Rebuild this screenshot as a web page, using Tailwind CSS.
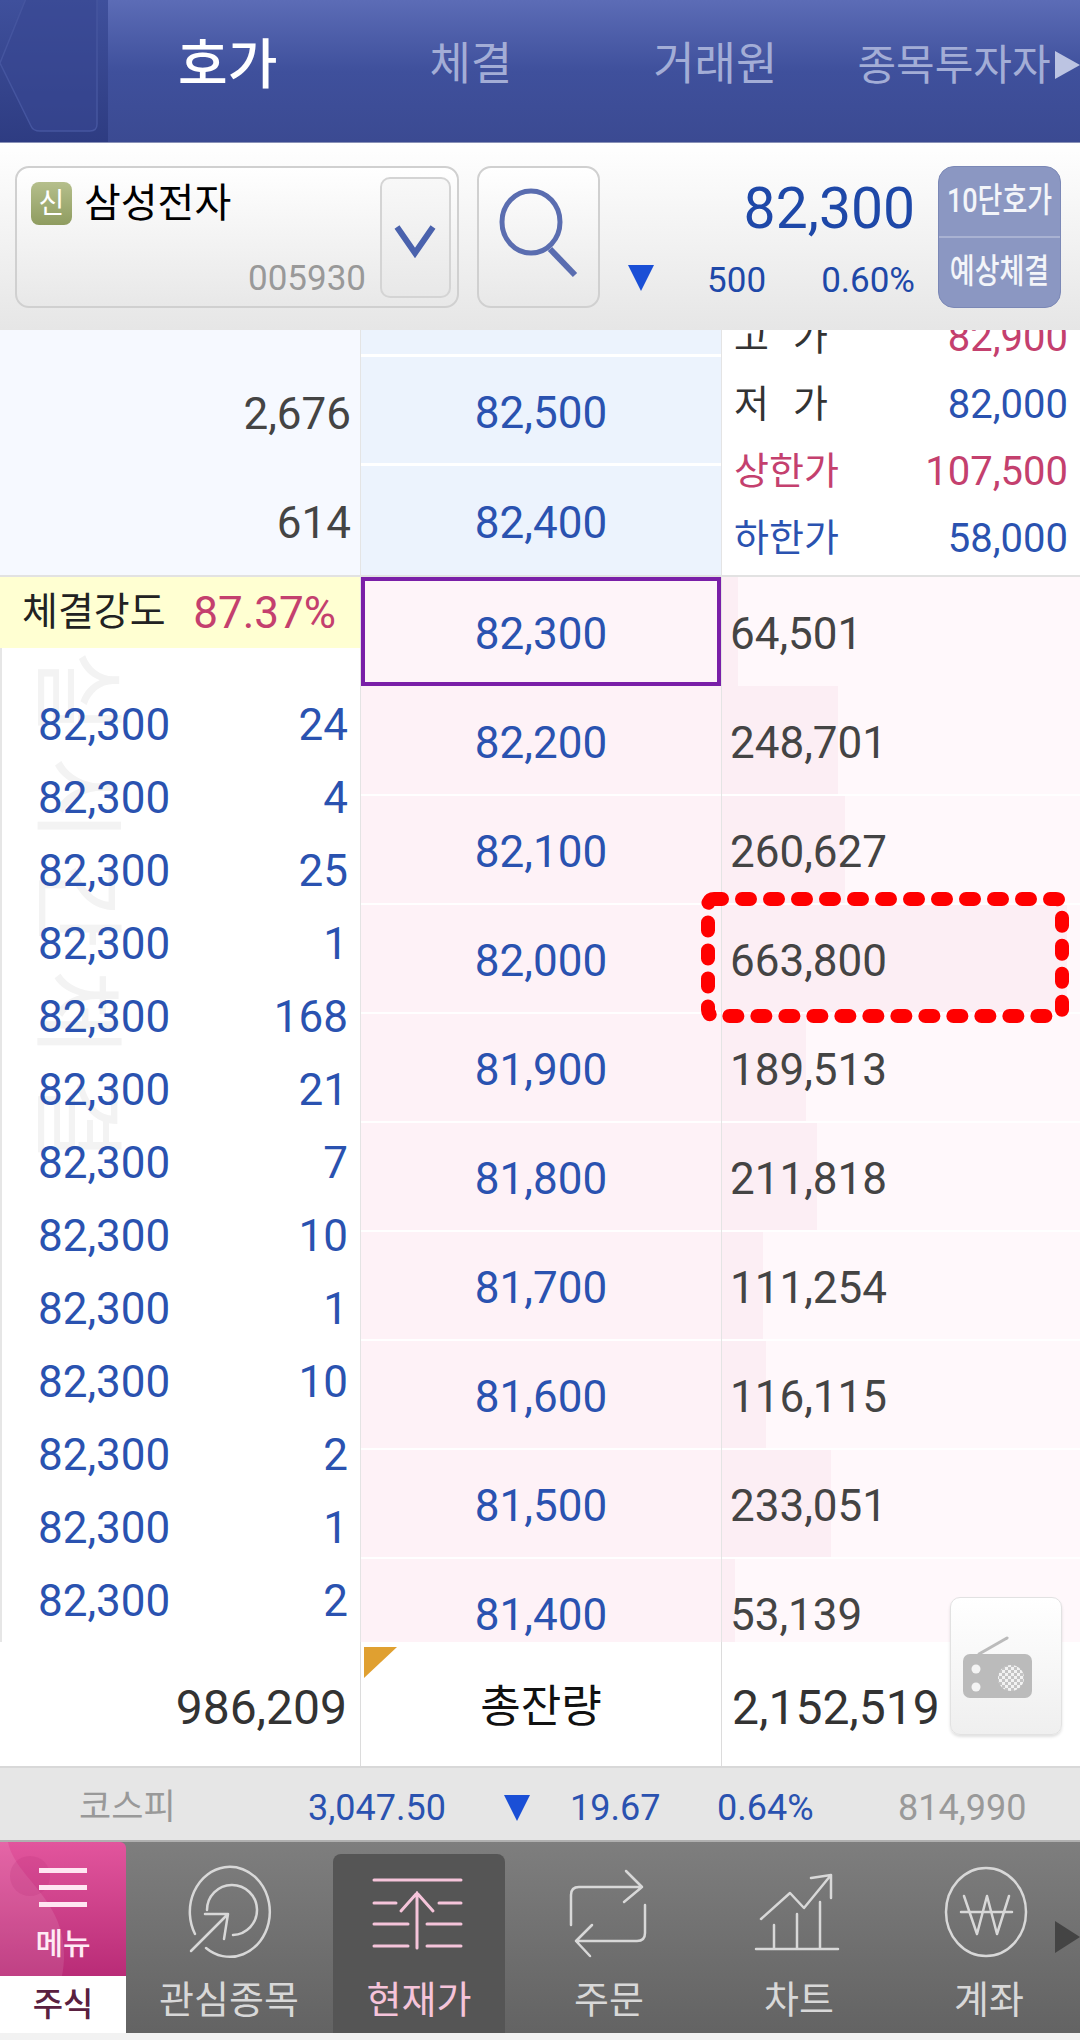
<!DOCTYPE html>
<html lang="ko">
<head>
    <meta charset="UTF-8">
    <meta name="viewport" content="width=device-width, initial-scale=1.0">
    <script src="https://cdn.jsdelivr.net/npm/@tailwindcss/browser@4"></script>
    <title>호가</title>
</head>
<body class="bg-white">
<div class="relative w-[1080px] h-[2040px] overflow-hidden flex flex-col bg-[#f2f2f2] font-[Roboto,'Noto_Sans_CJK_KR',sans-serif] text-[44px] text-[#444]">

  <!-- top tabs -->
  <div class="flex h-[143px] shrink-0 bg-gradient-to-b from-[#5c6cb6] via-[#3f509c] to-[#3b4a92] border-b border-[#8a92b8] whitespace-nowrap">
    <div class="w-[108px] shrink-0 bg-gradient-to-b from-[#3f509c] to-[#2e3c82]">
      <svg width="108" height="143" viewBox="0 0 108 143"><path d="M27 -4 L0 63 L31 126 Q33 131 40 131 L90 131 Q97 131 97 124 L97 -4 Z" fill="#384792" fill-opacity="0.6" stroke="#45559f" stroke-width="1.5"/></svg>
    </div>
    <div class="ml-[70px] h-[130px] flex items-center text-[54px] font-medium text-white">호가</div>
    <div class="ml-[152px] h-[130px] flex items-center text-[45px] text-[#a3add6]">체결</div>
    <div class="ml-[141px] h-[130px] flex items-center text-[45px] text-[#a3add6]">거래원</div>
    <div class="ml-[80px] h-[130px] flex items-center text-[42px] text-[#a3add6]">종목투자자</div>
    <div class="flex-1 h-[130px] flex items-center justify-end">
      <svg width="26" height="30" viewBox="0 0 26 30"><path d="M1 1 L26 15 L1 29 Z" fill="#bcc4e2"/></svg>
    </div>
  </div>

  <!-- stock bar -->
  <div class="relative flex h-[187px] shrink-0 items-start pt-[23px] pl-[15px] bg-gradient-to-b from-white to-[#e6e6e6]">
    <div class="relative w-[444px] h-[142px] rounded-[14px] border-2 border-[#d0d0d0] bg-gradient-to-b from-white to-[#e8e8e8]">
      <div class="flex items-center pt-[14px] pl-[14px]">
        <span class="w-[41px] h-[43px] rounded-[8px] flex items-center justify-center text-[28px] text-white bg-gradient-to-b from-[#b5bf8c] to-[#8f9c60]">신</span>
        <span class="ml-[12px] text-[40px] text-black leading-[42px]">삼성전자</span>
      </div>
      <div class="absolute right-[91px] bottom-[6px] text-[35px] leading-[42px] text-[#999]">005930</div>
      <div class="absolute right-[6px] top-[9px] w-[71px] h-[121px] rounded-[10px] border-2 border-[#d4d4d4] bg-gradient-to-b from-[#f8f8f8] to-[#e8e8e8]">
        <svg width="67" height="117" viewBox="0 0 67 117"><path d="M15 48 L33 74 L51 48" fill="none" stroke="#4a62ad" stroke-width="6"/></svg>
      </div>
    </div>
    <div class="ml-[18px] w-[123px] h-[142px] rounded-[14px] border-2 border-[#d0d0d0] bg-gradient-to-b from-white to-[#e8e8e8]">
      <svg width="119" height="138" viewBox="0 0 119 138"><ellipse cx="52" cy="54" rx="29" ry="31" fill="none" stroke="#5a6db0" stroke-width="5"/><path d="M71 81 L96 107" stroke="#5a6db0" stroke-width="6"/></svg>
    </div>
    <div class="w-[338px] h-[142px] flex flex-col items-end pr-[23px] text-[#1e48a8]">
      <div class="text-[57px] leading-[64px] mt-[11px]">82,300</div>
      <div class="flex items-center mt-[16px] text-[35px] leading-[48px]">
        <svg width="26" height="26" viewBox="0 0 26 26" class="mr-[53px] -mt-[6px]"><path d="M0 0 L26 0 L13 26 Z" fill="#1a4fd6"/></svg>
        <span class="mr-[55px]">500</span>
        <span>0.60%</span>
      </div>
    </div>
    <div class="w-[123px] h-[142px] rounded-[16px] bg-[#8b97c2] border border-[#7b88b6] flex flex-col text-[27px] font-medium text-white/90 whitespace-nowrap">
      <div class="h-[71px] flex items-center justify-center border-b-2 border-[#a9b2d2]"><span class="scale-y-[1.25]">10단호가</span></div>
      <div class="flex-1 flex items-center justify-center"><span class="scale-y-[1.25]">예상체결</span></div>
    </div>
  </div>

  <!-- quote table -->
  <div class="flex h-[1312px] shrink-0 overflow-hidden bg-white">
    <!-- left -->
    <div class="relative w-[360px] shrink-0 flex flex-col overflow-hidden">
      <div class="h-[247px] shrink-0 flex flex-col pt-[27px] bg-[#f6f9ff] border-b-2 border-[#e2e2e2] pr-[9px] text-right">
        <div class="h-[109px] pt-[5px] flex items-center justify-end">2,676</div>
        <div class="h-[109px] pt-[5px] flex items-center justify-end">614</div>
      </div>
      <div class="h-[71px] shrink-0 flex items-center justify-between pl-[22px] pr-[24px] bg-[#ffffd2]">
        <span class="text-[39px] text-[#222]">체결강도</span><span class="text-[44px] text-[#c4406e]">87.37%</span>
      </div>
      <div class="absolute left-[30px] top-[320px] text-[92px] leading-[92px] tracking-[22px] text-[#f3f3f3] whitespace-nowrap [writing-mode:vertical-rl] [text-orientation:sideways]">실시간체결</div>
      <div class="relative flex-1 flex flex-col pt-[40px] pl-[36px] pr-[12px] text-[#2a52b0] border-l-2 border-[#e6e6e6]">
        <div class="h-[73px] shrink-0 flex items-center justify-between"><span>82,300</span><span>24</span></div>
        <div class="h-[73px] shrink-0 flex items-center justify-between"><span>82,300</span><span>4</span></div>
        <div class="h-[73px] shrink-0 flex items-center justify-between"><span>82,300</span><span>25</span></div>
        <div class="h-[73px] shrink-0 flex items-center justify-between"><span>82,300</span><span>1</span></div>
        <div class="h-[73px] shrink-0 flex items-center justify-between"><span>82,300</span><span>168</span></div>
        <div class="h-[73px] shrink-0 flex items-center justify-between"><span>82,300</span><span>21</span></div>
        <div class="h-[73px] shrink-0 flex items-center justify-between"><span>82,300</span><span>7</span></div>
        <div class="h-[73px] shrink-0 flex items-center justify-between"><span>82,300</span><span>10</span></div>
        <div class="h-[73px] shrink-0 flex items-center justify-between"><span>82,300</span><span>1</span></div>
        <div class="h-[73px] shrink-0 flex items-center justify-between"><span>82,300</span><span>10</span></div>
        <div class="h-[73px] shrink-0 flex items-center justify-between"><span>82,300</span><span>2</span></div>
        <div class="h-[73px] shrink-0 flex items-center justify-between"><span>82,300</span><span>1</span></div>
        <div class="h-[73px] shrink-0 flex items-center justify-between"><span>82,300</span><span>2</span></div>
      </div>
    </div>

    <!-- middle -->
    <div class="w-[361px] shrink-0 flex flex-col text-[#2a52b0] border-l border-[#e4e4e4]">
      <div class="h-[247px] shrink-0 flex flex-col bg-[#ecf3fd] border-b-2 border-[#e2e2e2]">
        <div class="h-[27px] border-b-[3px] border-white"></div>
        <div class="h-[109px] pt-[5px] flex items-center justify-center border-b-[3px] border-white">82,500</div>
        <div class="h-[109px] pt-[5px] flex items-center justify-center">82,400</div>
      </div>
      <div class="h-[109px] shrink-0 flex items-center justify-center pt-[5px] bg-[#fef4f9] border-4 border-[#7a1fa8]">82,300</div>
      <div class="h-[110px] shrink-0 flex items-center justify-center pt-[5px] bg-[#fef2f7] border-b-2 border-white">82,200</div>
      <div class="h-[109px] shrink-0 flex items-center justify-center pt-[5px] bg-[#fef2f7] border-b-2 border-white">82,100</div>
      <div class="h-[109px] shrink-0 flex items-center justify-center pt-[5px] bg-[#fef2f7] border-b-2 border-white">82,000</div>
      <div class="h-[109px] shrink-0 flex items-center justify-center pt-[5px] bg-[#fef2f7] border-b-2 border-white">81,900</div>
      <div class="h-[109px] shrink-0 flex items-center justify-center pt-[5px] bg-[#fef2f7] border-b-2 border-white">81,800</div>
      <div class="h-[109px] shrink-0 flex items-center justify-center pt-[5px] bg-[#fef2f7] border-b-2 border-white">81,700</div>
      <div class="h-[109px] shrink-0 flex items-center justify-center pt-[5px] bg-[#fef2f7] border-b-2 border-white">81,600</div>
      <div class="h-[109px] shrink-0 flex items-center justify-center pt-[5px] bg-[#fef2f7] border-b-2 border-white">81,500</div>
      <div class="h-[109px] shrink-0 flex items-center justify-center pt-[3px] bg-[#fef2f7]">81,400</div>
    </div>

    <!-- right -->
    <div class="flex-1 flex flex-col bg-[#fff8fb] border-l border-[#e4e4e4]">
      <div class="h-[247px] shrink-0 overflow-hidden bg-white border-b-2 border-[#e2e2e2] pl-[12px] pr-[12px] text-[40px]">
        <div class="-mt-[26px] h-[67px] flex items-center justify-between text-[#333]"><span class="text-[38px] tracking-[24px]">고가</span><span class="text-[#c4406e]">82,900</span></div>
        <div class="h-[67px] flex items-center justify-between text-[#333]"><span class="text-[38px] tracking-[24px]">저가</span><span class="text-[#2a52b0]">82,000</span></div>
        <div class="h-[67px] flex items-center justify-between text-[#c4406e]"><span class="text-[38px]">상한가</span><span>107,500</span></div>
        <div class="h-[67px] flex items-center justify-between text-[#2a52b0]"><span class="text-[38px]">하한가</span><span>58,000</span></div>
      </div>
      <div class="relative h-[109px] shrink-0 flex items-center pl-[8px] pt-[5px]"><div class="absolute inset-y-0 left-0 w-[16px] bg-[#fceef4]"></div><span class="relative">64,501</span></div>
      <div class="relative h-[110px] shrink-0 flex items-center pl-[8px] pt-[5px] border-b-2 border-white"><div class="absolute inset-y-0 left-0 w-[116px] bg-[#fceef4]"></div><span class="relative">248,701</span></div>
      <div class="relative h-[109px] shrink-0 flex items-center pl-[8px] pt-[5px] border-b-2 border-white"><div class="absolute inset-y-0 left-0 w-[123px] bg-[#fceef4]"></div><span class="relative">260,627</span></div>
      <div class="relative h-[109px] shrink-0 flex items-center pl-[8px] pt-[5px] border-b-2 border-white"><div class="absolute inset-y-0 left-0 w-[345px] bg-[#fceef4]"></div><span class="relative">663,800</span></div>
      <div class="relative h-[109px] shrink-0 flex items-center pl-[8px] pt-[5px] border-b-2 border-white"><div class="absolute inset-y-0 left-0 w-[84px] bg-[#fceef4]"></div><span class="relative">189,513</span></div>
      <div class="relative h-[109px] shrink-0 flex items-center pl-[8px] pt-[5px] border-b-2 border-white"><div class="absolute inset-y-0 left-0 w-[95px] bg-[#fceef4]"></div><span class="relative">211,818</span></div>
      <div class="relative h-[109px] shrink-0 flex items-center pl-[8px] pt-[5px] border-b-2 border-white"><div class="absolute inset-y-0 left-0 w-[41px] bg-[#fceef4]"></div><span class="relative">111,254</span></div>
      <div class="relative h-[109px] shrink-0 flex items-center pl-[8px] pt-[5px] border-b-2 border-white"><div class="absolute inset-y-0 left-0 w-[44px] bg-[#fceef4]"></div><span class="relative">116,115</span></div>
      <div class="relative h-[109px] shrink-0 flex items-center pl-[8px] pt-[5px] border-b-2 border-white"><div class="absolute inset-y-0 left-0 w-[109px] bg-[#fceef4]"></div><span class="relative">233,051</span></div>
      <div class="relative h-[109px] shrink-0 flex items-center pl-[8px] pt-[3px]"><div class="absolute inset-y-0 left-0 w-[13px] bg-[#fceef4]"></div><span class="relative">53,139</span></div>
    </div>
  </div>

  <!-- totals -->
  <div class="flex h-[126px] shrink-0 bg-white border-b-2 border-[#d8d8d8] text-[#333]">
    <div class="w-[360px] shrink-0 flex items-center justify-end pt-[8px] pr-[13px] text-[48px]">986,209</div>
    <div class="relative w-[361px] shrink-0 flex items-center justify-center pt-[6px] text-[44px] text-[#111] border-l border-[#dcdcdc]">
      <svg width="34" height="32" viewBox="0 0 34 32" class="absolute left-[3px] top-[5px]"><path d="M0 0 L33 0 L0 31 Z" fill="#e0a030"/></svg>
      총잔량
    </div>
    <div class="flex-1 flex items-center pt-[8px] pl-[10px] text-[48px] border-l border-[#dcdcdc]">2,152,519</div>
  </div>

  <!-- index bar -->
  <div class="relative h-[72px] shrink-0 flex items-center pt-[8px] bg-[#e6e6e6] text-[36px] text-[#2a52b0] whitespace-nowrap">
    <span class="ml-[79px] w-[229px] text-[35px] text-[#999]">코스피</span>
    <span class="w-[196px]">3,047.50</span>
    <svg width="26" height="26" viewBox="0 0 26 26"><path d="M0 0 L26 0 L13 26 Z" fill="#1a4fd6"/></svg>
    <span class="ml-[40px] w-[147px]">19.67</span>
    <span class="w-[181px]">0.64%</span>
    <span class="text-[#999]">814,990</span>
  </div>

  <!-- bottom menu -->
  <div class="relative flex h-[193px] shrink-0 border-t-2 border-[#b0b0b0] bg-gradient-to-b from-[#7e7e7e] to-[#636363] text-[38px] text-[#d8d8d8] whitespace-nowrap">
    <div class="w-[126px] shrink-0 flex flex-col">
      <div class="relative h-[134px] flex flex-col items-center overflow-hidden rounded-tr-[6px] bg-gradient-to-b from-[#e2559d] to-[#b92b77]">
        <svg width="126" height="134" viewBox="0 0 126 134" class="absolute inset-0">
          <path d="M8 0 C16 40 76 60 62 134 L-4 134 L-4 0 Z" fill="#ffffff" fill-opacity="0.1"/>
          <circle cx="30" cy="34" r="20" fill="#b92b77" fill-opacity="0.2"/>
        </svg>
        <div class="relative mt-[26px] flex flex-col gap-[12px]">
          <div class="w-[48px] h-[5px] bg-[#ffe6f2]"></div>
          <div class="w-[48px] h-[5px] bg-[#ffe6f2]"></div>
          <div class="w-[48px] h-[5px] bg-[#ffe6f2]"></div>
        </div>
        <div class="relative mt-[20px] text-[30px] leading-[34px] font-medium text-[#ffeaf4]">메뉴</div>
      </div>
      <div class="flex-1 bg-white flex items-center justify-center text-[33px] font-medium text-[#5a2040]">주식</div>
    </div>
    <div class="flex gap-[18px] pl-[17px]">
      <div class="w-[172px] flex flex-col items-center">
        <svg width="100" height="100" viewBox="0 0 100 100" class="mt-[20px]" fill="none" stroke="#d8d8d8" stroke-width="2.5" stroke-linecap="round" stroke-linejoin="round">
          <path d="M16 72 A40 45 0 1 1 27 86"/>
          <path d="M28 48 A25 25 0 1 1 54 73"/>
          <path d="M12 89 L49 52 M26 52 L49 52 L45 77"/>
        </svg>
        <div class="mt-[16px] leading-[44px]">관심종목</div>
      </div>
      <div class="w-[172px] mt-[12px] flex flex-col items-center rounded-t-[8px] bg-[#555] text-[#f5c4da]">
        <svg width="100" height="100" viewBox="0 0 100 100" class="mt-[8px]" fill="none" stroke="#f5c4da" stroke-width="3" stroke-linecap="round">
          <path d="M5 18 H92 M5 41 H27 M70 41 H92 M5 62 H39 M58 62 H92 M5 84 H39 M58 84 H92"/>
          <path d="M48 86 V31 M32 49 L48 31 L64 49"/>
        </svg>
        <div class="mt-[16px] leading-[44px]">현재가</div>
      </div>
      <div class="w-[172px] flex flex-col items-center">
        <svg width="100" height="100" viewBox="0 0 100 100" class="mt-[20px]" fill="none" stroke="#d8d8d8" stroke-width="2.5" stroke-linecap="round" stroke-linejoin="round">
          <path d="M12 63 V33 Q12 25 20 25 H83 M67 9 L83 25 L65 40"/>
          <path d="M86 43 V71 Q86 79 78 79 H17 M33 63 L17 79 L31 94"/>
        </svg>
        <div class="mt-[16px] leading-[44px]">주문</div>
      </div>
      <div class="w-[172px] flex flex-col items-center">
        <svg width="100" height="100" viewBox="0 0 100 100" class="mt-[20px]" fill="none" stroke="#d8d8d8" stroke-width="2.5" stroke-linecap="round" stroke-linejoin="round">
          <path d="M7 87 H89 M25 63 V87 M48 52 V87 M71 40 V87"/>
          <path d="M12 57 L41 31 L55 46 L82 13 M62 16 L82 13 L82 36"/>
        </svg>
        <div class="mt-[16px] leading-[44px]">차트</div>
      </div>
      <div class="w-[172px] flex flex-col items-center">
        <svg width="100" height="100" viewBox="0 0 100 100" class="mt-[20px]" fill="none" stroke="#d8d8d8" stroke-width="2.5" stroke-linecap="round" stroke-linejoin="round">
          <ellipse cx="47" cy="50" rx="40" ry="44"/>
          <path d="M25 34 L38 72 L48 34 L58 72 L70 34 M22 50 H73"/>
        </svg>
        <div class="mt-[16px] leading-[44px]">계좌</div>
      </div>
    </div>
    <svg width="25" height="32" viewBox="0 0 25 32" class="absolute right-0 top-[79px]"><path d="M0 0 L25 16 L0 32 Z" fill="#444"/></svg>
  </div>

  <!-- radio button floating over the table -->
  <div class="absolute left-[950px] top-[1597px] w-[112px] h-[138px] rounded-[10px] border border-[#e2e2e2] bg-gradient-to-b from-white to-[#efefef] shadow-[0_2px_3px_rgba(0,0,0,0.12)]">
    <svg width="110" height="136" viewBox="0 0 110 136">
      <defs>
        <pattern id="mesh" width="6" height="6" patternUnits="userSpaceOnUse">
          <rect width="6" height="6" fill="#f2f2f2"/>
          <rect width="3" height="3" fill="#c4c4c4"/>
          <rect x="3" y="3" width="3" height="3" fill="#c4c4c4"/>
        </pattern>
      </defs>
      <path d="M28 56 L56 40" stroke="#bbb" stroke-width="3" stroke-linecap="round"/>
      <rect x="12" y="56" width="69" height="44" rx="7" fill="#bbb"/>
      <circle cx="25" cy="71" r="4.5" fill="#f4f4f4"/>
      <circle cx="25" cy="89" r="4.5" fill="#f4f4f4"/>
      <circle cx="60" cy="80" r="13" fill="url(#mesh)"/>
    </svg>
  </div>

  <!-- red dashed highlight -->
  <svg width="368" height="131" viewBox="0 0 368 131" class="absolute left-[701px] top-[892px]" fill="none">
    <rect x="7" y="7" width="354" height="117" rx="6" stroke="#ff0000" stroke-width="14" stroke-linecap="round" stroke-dasharray="8 20"/>
  </svg>
</div>
</body>
</html>
